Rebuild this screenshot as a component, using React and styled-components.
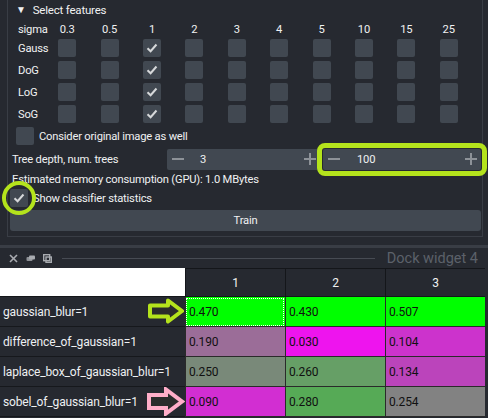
import React from "react";
import styled, { createGlobalStyle } from "styled-components";

const GlobalStyle = createGlobalStyle`
  html, body {
    margin: 0;
    padding: 0;
    background: #262930;
  }
  body {
    width: 488px;
    height: 418px;
    overflow: hidden;
    font-family: Roboto, "Noto Sans", sans-serif;
    font-size: 11.2px;
    letter-spacing: -0.2px;
    color: #f0f1f2;
  }
`;

const Page = styled.div`
  display: flex;
  flex-direction: column;
  width: 488px;
  height: 418px;
`;

const Panel = styled.div`
  box-sizing: border-box;
  margin-left: 7px;
  width: 476px;
  height: 237px;
  border: 1px solid #393d45;
  border-top: none;
  display: flex;
  flex-direction: column;
`;

const Title = styled.div`
  height: 19px;
  display: flex;
  align-items: center;
  padding-left: 8px;
  gap: 7px;
  font-size: 11.5px;
`;

const Triangle = styled.span`
  font-size: 10px;
`;

const SigmaGrid = styled.div`
  display: grid;
  grid-template-columns: 28px repeat(10, 42.4px);
  grid-template-rows: 18px repeat(4, 22px);
  padding-left: 10px;
  align-items: center;
  justify-items: center;
`;

const RowLabel = styled.div`
  justify-self: start;
  padding-top: ${(p) => (p.$head ? "2px" : "0")};
`;

const HeadValue = styled.div`
  padding-top: 2px;
`;

const Box = styled.div`
  position: relative;
  width: 18px;
  height: 18px;
  border-radius: 2px;
  background: #414851;
  display: flex;
  align-items: center;
  justify-content: center;
  flex: none;

  ${(p) =>
    p.$ring &&
    `
    &::after {
      content: "";
      position: absolute;
      left: -8px;
      top: -8px;
      width: 34px;
      height: 34px;
      box-sizing: border-box;
      border: 4px solid #b4e31c;
      border-radius: 50%;
    }
  `}
`;

const Check = ({ on, ring }) => (
  <Box $ring={ring}>
    {on && (
      <svg width="12" height="10" viewBox="0 0 12 10">
        <polyline
          points="1.5,5.2 4.6,8.2 10.5,1.5"
          fill="none"
          stroke="#d6d8da"
          strokeWidth="2"
        />
      </svg>
    )}
  </Box>
);

const OptionRow = styled.div`
  height: ${(p) => p.$h}px;
  display: flex;
  align-items: center;
  gap: 5px;
  padding-left: ${(p) => p.$pad}px;
`;

const TreeRow = styled.div`
  height: 24px;
  display: flex;
  align-items: center;
  padding-left: 4px;
`;

const TreeLabel = styled.div`
  width: 155px;
  flex: none;
`;

const Spin = styled.div`
  box-sizing: border-box;
  height: 21px;
  width: ${(p) => p.$w}px;
  margin-left: ${(p) => p.$ml}px;
  background: #414851;
  border-radius: 2px;
  display: flex;
  align-items: center;
  padding: 0 4px 0 5px;
  ${(p) => p.$mark && "outline: 5px solid #b4e31c; outline-offset: 1px;"}
`;

const SpinValue = styled.div`
  flex: 1;
  padding-left: ${(p) => p.$pad}px;
`;

const Minus = () => (
  <svg width="12" height="12" viewBox="0 0 12 12">
    <line x1="0" y1="6" x2="12" y2="6" stroke="#8d9298" strokeWidth="2" />
  </svg>
);

const Plus = () => (
  <svg width="12" height="12" viewBox="0 0 12 12">
    <line x1="0" y1="6" x2="12" y2="6" stroke="#8d9298" strokeWidth="2" />
    <line x1="6" y1="0" x2="6" y2="12" stroke="#8d9298" strokeWidth="2" />
  </svg>
);

const Note = styled.div`
  height: 16px;
  display: flex;
  align-items: center;
  padding-left: 4px;
`;

const TrainButton = styled.div`
  margin: 1px 1px 0 2px;
  height: 21px;
  border-radius: 3px;
  background: #414851;
  display: flex;
  align-items: center;
  justify-content: center;
`;

const Separator = styled.div`
  margin-top: 8px;
  height: 3px;
  background: #393d45;
`;

const DockBar = styled.div`
  height: 20px;
  display: flex;
  align-items: center;
  padding-left: 9px;
  gap: 8px;
`;

const DockLine = styled.div`
  flex: 1;
  height: 1px;
  background: #474b53;
  margin-left: 2px;
`;

const DockTitle = styled.div`
  font-size: 14.5px;
  letter-spacing: 0;
  color: #5c616a;
  padding-right: 10px;
  margin-left: 4px;
`;

const DockIcon = ({ kind }) => (
  <svg width="9" height="9" viewBox="0 0 9 9">
    {kind === "close" && (
      <g stroke="#a8abb0" strokeWidth="1.6">
        <line x1="1" y1="1" x2="8" y2="8" />
        <line x1="8" y1="1" x2="1" y2="8" />
      </g>
    )}
    {kind === "float" && (
      <g fill="#8e9196">
        <rect x="0.5" y="3" width="6" height="4" rx="1" />
        <rect x="3" y="1.5" width="6" height="4" rx="1" fill="#a8abb0" />
      </g>
    )}
    {kind === "max" && (
      <g fill="none" stroke="#a8abb0" strokeWidth="1.4">
        <rect x="0.7" y="0.7" width="6" height="6" />
        <rect x="3" y="3" width="5.3" height="5.3" />
      </g>
    )}
  </svg>
);

const TableWrap = styled.div`
  position: relative;
  display: grid;
  grid-template-columns: 185px 100px 100px 100px;
  grid-template-rows: 29px repeat(4, 30px);
  font-size: 12px;
  letter-spacing: -0.15px;
`;

const Corner = styled.div`
  background: #ffffff;
  border-bottom: 1px solid #14161a;
`;

const ColHead = styled.div`
  background: #262930;
  border-left: 1px solid #14161a;
  border-top: 1px solid #14161a;
  border-bottom: 1px solid #14161a;
  display: flex;
  align-items: center;
  justify-content: center;
  color: #f0f1f2;
`;

const RowHead = styled.div`
  background: #262930;
  border-bottom: 1px solid #16181c;
  display: flex;
  align-items: center;
  padding-left: 3px;
  color: #eef0f2;
  white-space: nowrap;
  overflow: hidden;
`;

const Cell = styled.div`
  background: ${(p) => p.$bg};
  border-left: 1px solid #2a2a2a;
  border-bottom: 1px solid #2a2a2a;
  display: flex;
  align-items: center;
  padding-left: 3px;
  color: #111111;
  ${(p) => p.$focus && "outline: 1px dotted #ffffff; outline-offset: -2px;"}
`;

const Arrow = styled.svg`
  position: absolute;
  left: ${(p) => p.$x}px;
  top: ${(p) => p.$y}px;
`;

const sigmas = ["0.3", "0.5", "1", "2", "3", "4", "5", "10", "15", "25"];
const filters = ["Gauss", "DoG", "LoG", "SoG"];

const rows = [
  {
    name: "gaussian_blur=1",
    cells: [
      ["0.470", "#00ff00"],
      ["0.430", "#00ff00"],
      ["0.507", "#00ff00"],
    ],
  },
  {
    name: "difference_of_gaussian=1",
    cells: [
      ["0.190", "#9b6d98"],
      ["0.030", "#ee14ee"],
      ["0.104", "#cc33cc"],
    ],
  },
  {
    name: "laplace_box_of_gaussian_blur=1",
    cells: [
      ["0.250", "#798979"],
      ["0.260", "#669f66"],
      ["0.134", "#bb44bb"],
    ],
  },
  {
    name: "sobel_of_gaussian_blur=1",
    cells: [
      ["0.090", "#d22ed2"],
      ["0.280", "#56aa56"],
      ["0.254", "#828282"],
    ],
  },
];

export default function App() {
  return (
    <Page>
      <GlobalStyle />
      <Panel>
        <Title>
          <Triangle>▼</Triangle>
          Select features
        </Title>
        <SigmaGrid>
          <RowLabel $head>sigma</RowLabel>
          {sigmas.map((s) => (
            <HeadValue key={s}>{s}</HeadValue>
          ))}
          {filters.map((f) => (
            <React.Fragment key={f}>
              <RowLabel>{f}</RowLabel>
              {sigmas.map((s, i) => (
                <Check key={s} on={i === 2} />
              ))}
            </React.Fragment>
          ))}
        </SigmaGrid>
        <OptionRow $h={22} $pad={8}>
          <Check />
          Consider original image as well
        </OptionRow>
        <TreeRow>
          <TreeLabel>Tree depth, num. trees</TreeLabel>
          <Spin $w={153} $ml={0}>
            <Minus />
            <SpinValue $pad={16}>3</SpinValue>
            <Plus />
          </Spin>
          <Spin $w={158} $ml={3} $mark>
            <Minus />
            <SpinValue $pad={17}>100</SpinValue>
            <Plus />
          </Spin>
        </TreeRow>
        <Note>Estimated memory consumption (GPU): 1.0 MBytes</Note>
        <OptionRow $h={22} $pad={2}>
          <Check on ring />
          Show classifier statistics
        </OptionRow>
        <TrainButton>Train</TrainButton>
      </Panel>
      <Separator />
      <DockBar>
        <DockIcon kind="close" />
        <DockIcon kind="float" />
        <DockIcon kind="max" />
        <DockLine />
        <DockTitle>Dock widget 4</DockTitle>
      </DockBar>
      <TableWrap>
        <Corner />
        <ColHead>1</ColHead>
        <ColHead>2</ColHead>
        <ColHead>3</ColHead>
        {rows.map((r, ri) => (
          <React.Fragment key={r.name}>
            <RowHead>{r.name}</RowHead>
            {r.cells.map(([v, bg], ci) => (
              <Cell key={ci} $bg={bg} $focus={ri === 0 && ci === 0}>
                {v}
              </Cell>
            ))}
          </React.Fragment>
        ))}
        <Arrow $x={147} $y={30} width="38" height="26" viewBox="0 0 38 26">
          <polygon
            points="3,7.5 21,7.5 21,2.5 35,13 21,23.5 21,18.5 3,18.5"
            fill="#2b2c2c"
            stroke="#b4e31c"
            strokeWidth="4"
            strokeLinejoin="round"
          />
        </Arrow>
        <Arrow $x={146} $y={119} width="39" height="29" viewBox="0 0 39 29">
          <polygon
            points="3,8 20,8 20,2.5 36,14.5 20,26.5 20,21 3,21"
            fill="#2b2c2c"
            stroke="#ffaec9"
            strokeWidth="4"
            strokeLinejoin="miter"
          />
        </Arrow>
      </TableWrap>
    </Page>
  );
}
